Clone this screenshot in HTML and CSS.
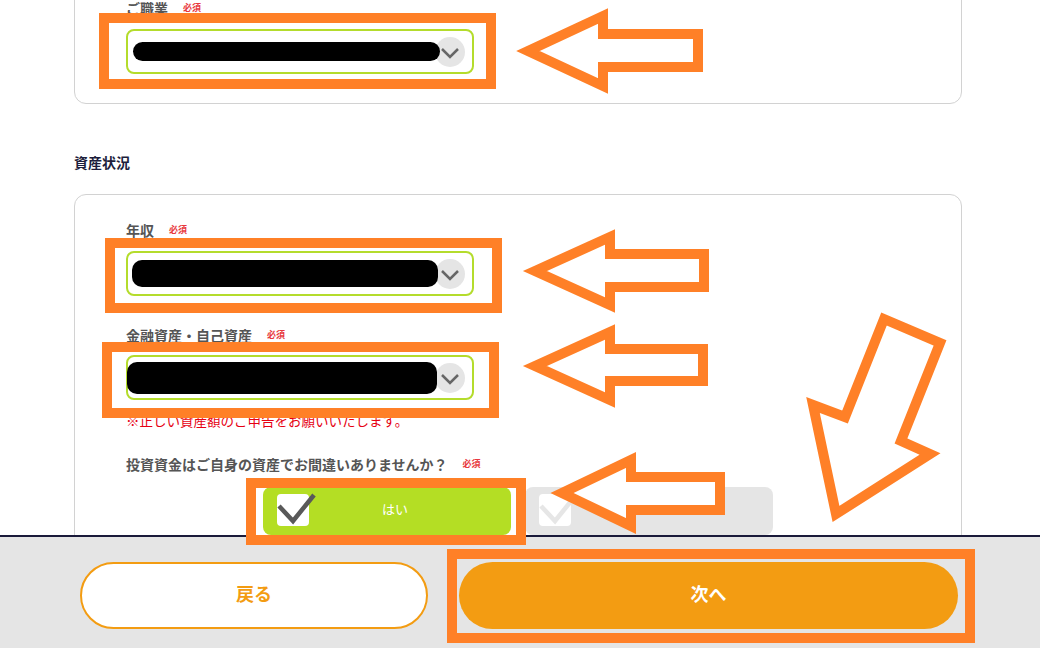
FILE: index.html
```html
<!DOCTYPE html>
<html lang="ja">
<head>
    <meta charset="UTF-8">
    <meta name="viewport" content="width=device-width, initial-scale=1.0">
    <title>お客様情報の入力</title>
    <link rel="stylesheet" href="styles.css">
</head>
<body>
    <div class="page">
        <section class="card card-job">
            <div class="field">
                <div class="field-label">ご職業<span class="req">必須</span></div>
                <div class="select">
                    <span class="redact redact-job"></span>
                    <span class="chev"><svg viewBox="0 0 30 30" width="30" height="30"><polyline points="7,12 15,20 23,12"/></svg></span>
                </div>
            </div>
        </section>

        <h2 class="section-title">資産状況</h2>

        <section class="card card-assets">
            <div class="field">
                <div class="field-label">年収<span class="req">必須</span></div>
                <div class="select">
                    <span class="redact redact-income"></span>
                    <span class="chev"><svg viewBox="0 0 30 30" width="30" height="30"><polyline points="7,12 15,20 23,12"/></svg></span>
                </div>
            </div>

            <div class="field field-next">
                <div class="field-label">金融資産・自己資産<span class="req">必須</span></div>
                <div class="select">
                    <span class="redact redact-assets"></span>
                    <span class="chev"><svg viewBox="0 0 30 30" width="30" height="30"><polyline points="7,12 15,20 23,12"/></svg></span>
                </div>
                <p class="note">※正しい資産額のご申告をお願いいたします。</p>
            </div>

            <div class="question">
                <div class="field-label">投資資金はご自身の資産でお間違いありませんか？<span class="req">必須</span></div>
                <div class="choices">
                    <div class="choice choice-on">
                        <span class="box"><svg viewBox="0 0 40 32" width="40" height="32"><polyline points="2,13 16,28 37,2"/></svg></span>
                        <span class="choice-text">はい</span>
                    </div>
                    <div class="choice">
                        <span class="box"><svg viewBox="0 0 40 32" width="40" height="32"><polyline points="2,13 16,28 37,2"/></svg></span>
                        <span class="choice-text">いいえ</span>
                    </div>
                </div>
            </div>
        </section>
    </div>

    <footer class="footer">
        <button class="btn btn-back">戻る</button>
        <button class="btn btn-next">次へ</button>
    </footer>

    <!-- annotation marks drawn over the screen -->
    <svg class="marks" viewBox="0 0 1040 648" width="1040" height="648">
        <rect x="104" y="18" width="387" height="66"/>
        <rect x="110" y="243" width="387" height="65"/>
        <rect x="107" y="347" width="387" height="66"/>
        <rect x="251" y="483" width="270" height="57"/>
        <rect x="452" y="554" width="518" height="84"/>
        <path class="arrow" d="M528,51 L603,16 L603,34 L698,34 L698,67 L603,67 L603,86 Z"/>
        <path class="arrow" d="M535,271 L610,237 L610,254 L704,254 L704,287 L610,287 L610,305 Z"/>
        <path class="arrow" d="M535,366 L610,332 L610,349 L703,349 L703,381 L610,381 L610,400 Z"/>
        <path class="arrow" d="M562,493 L631,460 L631,477 L720,477 L720,510 L631,510 L631,526 Z"/>
        <path class="arrow" d="M884,319 L940,343 L901,441 L930,454 L836,514 L813,405 L845,417 Z"/>
    </svg>
</body>
</html>
```

FILE: styles.css
```css
html, body {
    margin: 0;
    padding: 0;
    height: 100%;
    overflow: hidden;
}

body {
    font-family: "Noto Sans CJK JP", "Noto Sans", sans-serif;
    background-color: #ffffff;
    color: #555555;
}

.page {
    width: 888px;
    margin: -28px 0 0 74px;
}

.card {
    border: 1px solid #d2d2d2;
    border-radius: 12px;
    padding: 25px 51px 29px;
    background: #ffffff;
}

.card-assets {
    padding-bottom: 120px;
}

.field-label {
    font-size: 14px;
    line-height: 20px;
    font-weight: bold;
    color: #555555;
    margin-bottom: 11px;
}

.req {
    font-size: 9px;
    color: #e8383d;
    margin-left: 15px;
    vertical-align: 3px;
}

.select {
    width: 339px;
    height: 41px;
    border: 2px solid #b4dc2c;
    border-radius: 8px;
    display: flex;
    align-items: center;
    padding-left: 5px;
}

.redact {
    display: block;
    background: #000000;
    border-radius: 10px;
    position: relative;
    z-index: 1;
    margin-right: -12px;
}

.redact-job {
    width: 307px;
    height: 19px;
}

.redact-income {
    width: 306px;
    height: 27px;
    margin-left: -1px;
}

.redact-assets {
    width: 310px;
    height: 32px;
    margin-left: -6px;
}

.chev {
    margin-left: auto;
    margin-right: 7px;
    width: 30px;
    height: 30px;
    border-radius: 50%;
    background: #e5e5e5;
    display: flex;
}

.chev polyline {
    fill: none;
    stroke: #666666;
    stroke-width: 2.5;
}

.field-next {
    margin-top: 29px;
}

.field-next .field-label {
    margin-bottom: 10px;
}

.note {
    margin: 10px 0 0;
    font-size: 13.5px;
    line-height: 20px;
    color: #e60012;
}

.question {
    margin-top: 24px;
}

.question .field-label {
    margin-bottom: 13px;
}

.section-title {
    margin: 48px 0 22px;
    font-size: 14px;
    line-height: 20px;
    font-weight: bold;
    color: #1e1e3c;
}

.choices {
    display: flex;
    justify-content: center;
    gap: 14px;
}

.choice {
    width: 248px;
    height: 48px;
    border-radius: 8px;
    background: #e5e5e5;
    display: flex;
    align-items: flex-start;
    padding: 7px 30px 0 14px;
    box-sizing: border-box;
}

.choice-on {
    background: #b4de24;
}

.box {
    position: relative;
    width: 32px;
    height: 32px;
    border-radius: 4px;
    background: #ffffff;
    flex: none;
}

.box svg {
    position: absolute;
    left: 0;
    top: -1px;
    overflow: visible;
}

.box polyline {
    fill: none;
    stroke: #e6e6e6;
    stroke-width: 4.5;
}

.choice-on .box polyline {
    stroke: #595959;
}

.choice-text {
    flex: 1;
    text-align: center;
    font-size: 13px;
    line-height: 20px;
    margin-top: 5px;
    color: #333333;
}

.choice-on .choice-text {
    color: #ffffff;
}

.footer {
    position: fixed;
    left: 0;
    right: 0;
    bottom: 0;
    height: 86px;
    border-top: 2px solid #1a1a3a;
    background: #e5e5e5;
    display: flex;
    gap: 31px;
    padding: 25px 82px 0 80px;
}

.btn {
    height: 67px;
    border-radius: 34px;
    padding: 0 0 5px;
    font-family: inherit;
    font-size: 18px;
    font-weight: bold;
    cursor: pointer;
}

.btn-back {
    flex: 0 0 348px;
    background: #ffffff;
    border: 2px solid #f39c12;
    color: #f39c12;
}

.btn-next {
    flex: 1;
    background: #f39c12;
    border: none;
    color: #ffffff;
}

.marks {
    position: fixed;
    left: 0;
    top: 0;
    z-index: 10;
    pointer-events: none;
}

.marks rect {
    fill: none;
    stroke: #ff8027;
    stroke-width: 10;
}

.marks .arrow {
    fill: #ffffff;
    stroke: #ff8027;
    stroke-width: 10;
}
```
